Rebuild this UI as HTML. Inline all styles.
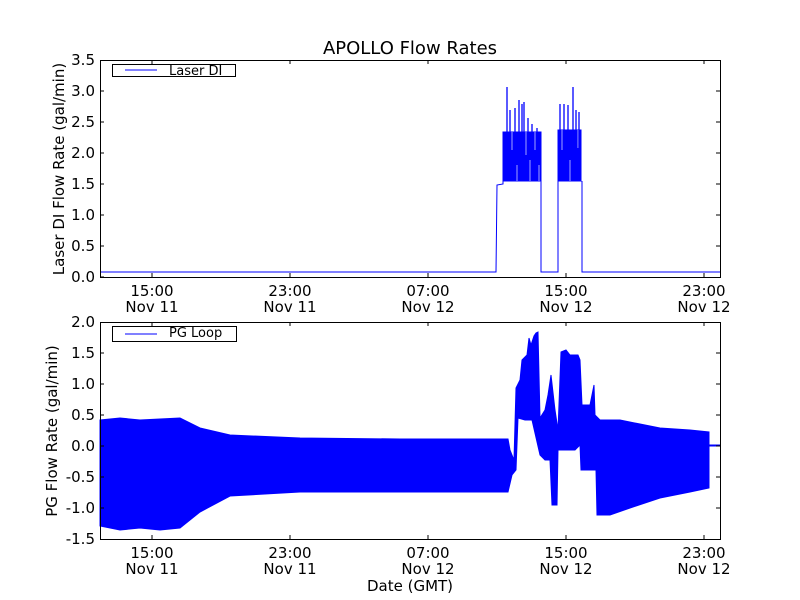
<!DOCTYPE html>
<html><head><meta charset="utf-8"><style>
html,body{margin:0;padding:0;background:#fff;}
svg{display:block;font-family:"DejaVu Sans","Liberation Sans",sans-serif;}
</style></head><body>
<svg width="800" height="600" viewBox="0 0 800 600" xmlns="http://www.w3.org/2000/svg">
<rect width="800" height="600" fill="#fff"/>
<text x="410" y="54" font-size="18" text-anchor="middle">APOLLO Flow Rates</text>

<!-- TOP PLOT -->
<g fill="none" stroke="#0000ff" stroke-width="1">
<polyline points="100,272 496,272 497,185 503,184 503,181"/>
<polyline points="541,181 541,272 558,272 558,181"/>
<polyline points="582,181 582,272 720,272"/>
</g>
<g fill="#0000ff" stroke="#0000ff" stroke-width="1">
<polygon points="503,132 541,132 541,181 503,181"/>
<polygon points="558,130 581,130 581,181 558,181"/>
</g>
<g stroke="#ffffff" stroke-width="0.8" opacity="0.8">
<line x1="512" y1="132" x2="512" y2="150"/><line x1="517" y1="165" x2="517" y2="181"/>
<line x1="526" y1="132" x2="526" y2="155"/><line x1="530" y1="160" x2="530" y2="181"/>
<line x1="535" y1="132" x2="535" y2="150"/><line x1="539" y1="165" x2="539" y2="181"/>
<line x1="562" y1="130" x2="562" y2="150"/><line x1="570" y1="160" x2="570" y2="181"/>
<line x1="578" y1="130" x2="578" y2="148"/>
</g>
<g stroke="#0000ff" stroke-width="1.3">
<line x1="507" y1="87" x2="507" y2="181"/>
<line x1="510" y1="110" x2="510" y2="180"/>
<line x1="515" y1="108" x2="515" y2="180"/>
<line x1="519" y1="100" x2="519" y2="180"/>
<line x1="522" y1="104" x2="522" y2="180"/>
<line x1="524" y1="102" x2="524" y2="180"/>
<line x1="528" y1="118" x2="528" y2="180"/>
<line x1="532" y1="124" x2="532" y2="180"/>
<line x1="537" y1="128" x2="537" y2="180"/>
<line x1="560" y1="104" x2="560" y2="181"/>
<line x1="564" y1="104" x2="564" y2="181"/>
<line x1="568" y1="105" x2="568" y2="181"/>
<line x1="573" y1="87" x2="573" y2="181"/>
<line x1="576" y1="110" x2="576" y2="181"/>
<line x1="579" y1="112" x2="579" y2="181"/>
</g>
<rect x="100.5" y="60.5" width="620" height="217" fill="none" stroke="#000" stroke-width="1"/>
<g stroke="#000" stroke-width="1">
<line x1="100" y1="277" x2="104" y2="277"/><line x1="100" y1="246" x2="104" y2="246"/><line x1="100" y1="215" x2="104" y2="215"/><line x1="100" y1="184" x2="104" y2="184"/><line x1="100" y1="153" x2="104" y2="153"/><line x1="100" y1="122" x2="104" y2="122"/><line x1="100" y1="91" x2="104" y2="91"/>
<line x1="716" y1="246" x2="720" y2="246"/><line x1="716" y1="215" x2="720" y2="215"/><line x1="716" y1="184" x2="720" y2="184"/><line x1="716" y1="153" x2="720" y2="153"/><line x1="716" y1="122" x2="720" y2="122"/><line x1="716" y1="91" x2="720" y2="91"/>
<line x1="152" y1="277" x2="152" y2="273"/><line x1="290" y1="277" x2="290" y2="273"/><line x1="428" y1="277" x2="428" y2="273"/><line x1="566" y1="277" x2="566" y2="273"/><line x1="704" y1="277" x2="704" y2="273"/>
<line x1="152" y1="60" x2="152" y2="64"/><line x1="290" y1="60" x2="290" y2="64"/><line x1="428" y1="60" x2="428" y2="64"/><line x1="566" y1="60" x2="566" y2="64"/><line x1="704" y1="60" x2="704" y2="64"/>
</g>
<g font-size="15" text-anchor="end">
<text x="95" y="282">0.0</text><text x="95" y="251">0.5</text><text x="95" y="220">1.0</text><text x="95" y="189">1.5</text><text x="95" y="158">2.0</text><text x="95" y="127">2.5</text><text x="95" y="96">3.0</text><text x="95" y="65">3.5</text>
</g>
<g font-size="15" text-anchor="middle">
<text x="152" y="296">15:00</text><text x="152" y="312">Nov 11</text>
<text x="290" y="296">23:00</text><text x="290" y="312">Nov 11</text>
<text x="428" y="296">07:00</text><text x="428" y="312">Nov 12</text>
<text x="566" y="296">15:00</text><text x="566" y="312">Nov 12</text>
<text x="704" y="296">23:00</text><text x="704" y="312">Nov 12</text>
</g>
<text transform="translate(64,169) rotate(-90)" font-size="15" text-anchor="middle">Laser DI Flow Rate (gal/min)</text>
<rect x="112.5" y="64.5" width="123" height="12" fill="#fff" stroke="#000"/>
<line x1="125" y1="70" x2="157" y2="70" stroke="#0000ff"/>
<text x="169" y="75" font-size="13">Laser DI</text>

<!-- BOTTOM PLOT -->
<polygon fill="#0000ff" stroke="#0000ff" stroke-width="1" points="100,420 120,418 140,420 160,419 180,418 200,428 230,435 300,438 400,439 508,439 510,450 514,460 516,388 520,380 522,360 527,355 529,338 531,345 534,336 536,333 538,332 540,418 545,410 548,395 551,375 555,410 558,430 561,352 566,350 570,355 578,355 580,360 582,405 590,405 594,385 595,415 600,420 620,420 640,424 660,428 690,430 709,432 709,445 720,445 720,446 709,446 709,488 690,492 660,498 630,508 610,515 597,515 596,470 581,470 580,445 575,450 558,450 557,505 552,505 550,460 545,460 540,455 532,420 525,420 518,418 516,470 512,475 508,492 400,492 300,492 230,496 200,512 180,528 160,530 140,528 120,530 100,526"/>
<rect x="100.5" y="322.5" width="620" height="217" fill="none" stroke="#000" stroke-width="1"/>
<g stroke="#000" stroke-width="1">
<line x1="100" y1="508" x2="104" y2="508"/><line x1="100" y1="477" x2="104" y2="477"/><line x1="100" y1="446" x2="104" y2="446"/><line x1="100" y1="415" x2="104" y2="415"/><line x1="100" y1="384" x2="104" y2="384"/><line x1="100" y1="353" x2="104" y2="353"/>
<line x1="716" y1="508" x2="720" y2="508"/><line x1="716" y1="477" x2="720" y2="477"/><line x1="716" y1="446" x2="720" y2="446"/><line x1="716" y1="415" x2="720" y2="415"/><line x1="716" y1="384" x2="720" y2="384"/><line x1="716" y1="353" x2="720" y2="353"/>
<line x1="152" y1="539" x2="152" y2="535"/><line x1="290" y1="539" x2="290" y2="535"/><line x1="428" y1="539" x2="428" y2="535"/><line x1="566" y1="539" x2="566" y2="535"/><line x1="704" y1="539" x2="704" y2="535"/>
<line x1="152" y1="322" x2="152" y2="326"/><line x1="290" y1="322" x2="290" y2="326"/><line x1="428" y1="322" x2="428" y2="326"/><line x1="566" y1="322" x2="566" y2="326"/><line x1="704" y1="322" x2="704" y2="326"/>
</g>
<g font-size="15" text-anchor="end">
<text x="95" y="544">-1.5</text><text x="95" y="513">-1.0</text><text x="95" y="482">-0.5</text><text x="95" y="451">0.0</text><text x="95" y="420">0.5</text><text x="95" y="389">1.0</text><text x="95" y="358">1.5</text><text x="95" y="327">2.0</text>
</g>
<g font-size="15" text-anchor="middle">
<text x="152" y="558">15:00</text><text x="152" y="574">Nov 11</text>
<text x="290" y="558">23:00</text><text x="290" y="574">Nov 11</text>
<text x="428" y="558">07:00</text><text x="428" y="574">Nov 12</text>
<text x="566" y="558">15:00</text><text x="566" y="574">Nov 12</text>
<text x="704" y="558">23:00</text><text x="704" y="574">Nov 12</text>
</g>
<text x="410" y="591" font-size="15" text-anchor="middle">Date (GMT)</text>
<text transform="translate(57,431) rotate(-90)" font-size="15" text-anchor="middle">PG Flow Rate (gal/min)</text>
<rect x="112.5" y="326.5" width="124" height="15" fill="#fff" stroke="#000"/>
<line x1="125" y1="334" x2="157" y2="334" stroke="#0000ff"/>
<text x="169" y="337" font-size="13">PG Loop</text>
</svg>
</body></html>
